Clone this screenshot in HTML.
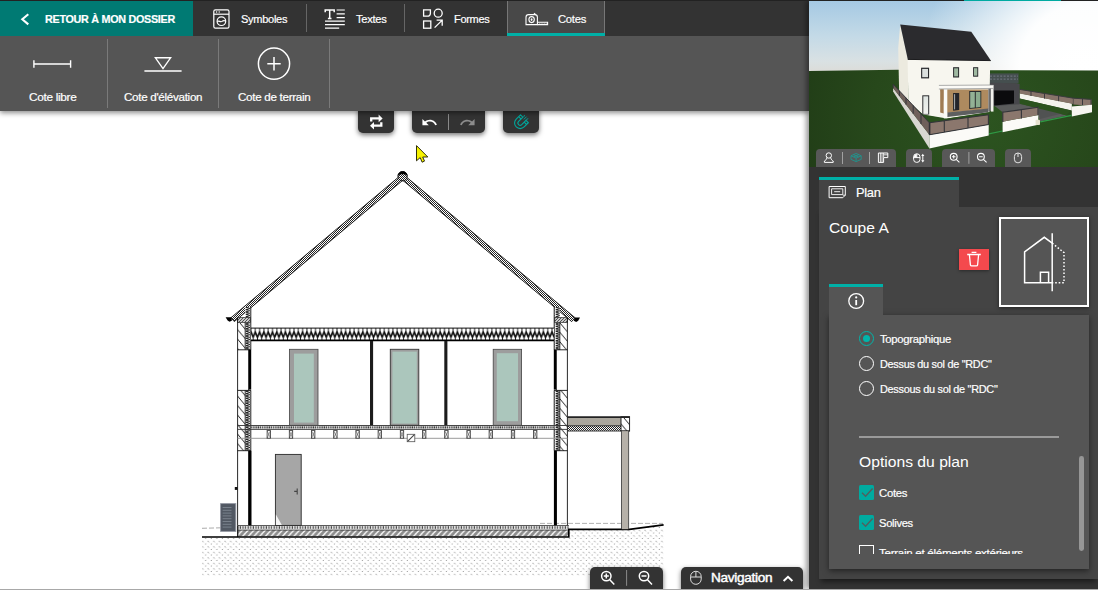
<!DOCTYPE html>
<html lang="fr">
<head>
<meta charset="utf-8">
<title>Coupe A</title>
<style>
html,body{margin:0;padding:0;}
body{width:1098px;height:590px;overflow:hidden;background:#fff;font-family:"Liberation Sans",sans-serif;color:#fff;}
#app{position:relative;width:1098px;height:590px;overflow:hidden;background:#fff;}
.abs{position:absolute;}
.t{position:absolute;white-space:nowrap;line-height:1;color:#fff;}
/* top */
#topline{left:0;top:0;width:1098px;height:1px;background:#222;}
#header{left:0;top:1px;width:809px;height:35px;background:#333;}
#back{left:0;top:1px;width:193px;height:35px;background:#007a73;}
#toolbar{left:0;top:36px;width:809px;height:74.5px;background:#555;box-shadow:0 2px 5px rgba(0,0,0,.45);}
.hdiv{position:absolute;top:4px;width:1px;height:28px;background:#666;}
.tdiv{position:absolute;top:39px;width:1px;height:69px;background:#7a7a7a;}
#tabact{left:507px;top:1px;width:98px;height:35px;background:#484848;border-left:1px solid #777;border-right:1px solid #777;box-sizing:border-box;}
#tabact i{position:absolute;left:-1px;right:-1px;bottom:0;height:3px;background:#00b0a7;}
/* right */
#right{left:809px;top:1px;width:289px;height:588px;background:#333;box-shadow:-3px 0 5px rgba(0,0,0,.4);}
#view3d{left:809px;top:1px;width:289px;height:166px;overflow:hidden;}
#inner{left:819px;top:207px;width:279px;height:372px;background:#444;box-shadow:0 5px 5px -2px rgba(0,0,0,.45);}
#plantab{left:819px;top:177px;width:140px;height:30px;background:#444;border-top:3px solid #00b0a7;box-sizing:border-box;}
#content{left:829px;top:315px;width:260px;height:254px;background:#555;box-shadow:0 2px 6px rgba(0,0,0,.5);}
#infotab{left:829px;top:284px;width:54px;height:31px;background:#555;border-top:3px solid #00b0a7;box-sizing:border-box;}
#bottombar{left:0;top:588.6px;width:1098px;height:1.4px;background:#a8a8a8;}
.vbtn{position:absolute;top:148px;height:18px;background:#585858;border-radius:4px 4px 0 0;}
.cbtn{position:absolute;background:#333;box-shadow:0 2px 5px rgba(0,0,0,.55);}

.lbl{letter-spacing:-0.3px;-webkit-text-stroke:0.2px #fff;position:absolute;white-space:nowrap;line-height:14px;height:14px;color:#fff;transform-origin:0 50%;}
.ic{position:absolute;overflow:visible;}
</style>
</head>
<body>
<div id="app">
  <!-- canvas drawing -->
  <svg id="draw" class="abs" style="left:0;top:110px" width="809" height="480" viewBox="0 110 809 480">
    <defs>
      <pattern id="pChk" width="2" height="2" patternUnits="userSpaceOnUse"><rect width="2" height="2" fill="#fff"/><rect x="0" y="0" width="1" height="1" fill="#222" shape-rendering="crispEdges"/><rect x="1" y="1" width="1" height="1" fill="#222" shape-rendering="crispEdges"/></pattern>
      <pattern id="pDots" width="5.6" height="5.5" patternUnits="userSpaceOnUse"><path d="M0.5 1.8L1.8 3.1M3.3 5.8L4.6 4.5" stroke="#858585" stroke-width="0.9" fill="none"/></pattern>
      <pattern id="pBlkL" width="8" height="9.5" patternUnits="userSpaceOnUse"><rect width="8" height="9.5" fill="#fff"/><path d="M-1 -1.2L9 10.7M-1 -10.7L9 1.2M-1 8.3L9 20.2" stroke="#111" stroke-width="0.9"/></pattern>
      <pattern id="pInsH" width="4.3" height="12.4" patternUnits="userSpaceOnUse" x="251" y="328"><rect width="4.3" height="12.4" fill="#fff"/><path d="M-0.3 3.1L2.15 9.3L4.6 3.1" stroke="#111" stroke-width="1.7" fill="none" stroke-linejoin="round"/><path d="M0 0V3.4M4.3 0V3.4M2.15 9V12.4" stroke="#111" stroke-width="0.9" fill="none"/></pattern>
      <pattern id="pInsV" width="5" height="2.4" patternUnits="userSpaceOnUse"><rect width="5" height="2.4" fill="#fff"/><path d="M0.6 0L4.4 1.2L0.6 2.4" stroke="#111" stroke-width="1" fill="none"/></pattern>
      <pattern id="pSlab" width="5.7" height="6" patternUnits="userSpaceOnUse"><rect width="5.7" height="6" fill="#8d8d8d"/><path d="M-1 6.5L6.7 -1.2M-1 12.2L6.7 4.5M-1 0.8L6.7 -6.9" stroke="#f4f4f4" stroke-width="1.5"/></pattern>
      <pattern id="pScr" width="2.6" height="5" patternUnits="userSpaceOnUse"><rect width="2.6" height="5" fill="#e9e9e9"/><rect x="0.6" y="1.2" width="1.1" height="2.6" fill="#444"/></pattern>
      <pattern id="pRing" width="3" height="3" patternUnits="userSpaceOnUse"><rect width="3" height="3" fill="#c8c8c8"/><path d="M-1 4L4 -1M-1 1L1 -1M2 4L4 2" stroke="#444" stroke-width="0.9"/></pattern>
      <pattern id="pFlr" width="2.2" height="3.8" patternUnits="userSpaceOnUse" y="425.4"><rect width="2.2" height="3.8" fill="#f2f2f2"/><rect x="0.3" y="0.9" width="1.3" height="2.2" fill="#3a3a3a"/></pattern>
    </defs>
    <!-- ground -->
    <path d="M202 537.5H568.9V529.6H629.5L663.6 525.3V575.4H202Z" fill="url(#pDots)"/>
    <path d="M202 528.3L237 527.4" stroke="#a0a0a0" stroke-width="0.9" stroke-dasharray="5 2" fill="none"/>
    <path d="M540 523.4H663" stroke="#a8a8a8" stroke-width="0.9" stroke-dasharray="5 2" fill="none"/>
    <!-- slab -->
    <rect x="237.6" y="525.4" width="331.3" height="4.8" fill="url(#pScr)"/>
    <rect x="237.6" y="530" width="331.3" height="6.6" fill="url(#pSlab)"/>
    <path d="M237.6 525.5H568.9M237.6 530.1H568.9" stroke="#333" stroke-width="0.8" fill="none"/>
    <path d="M237.7 525.4V537" stroke="#111" stroke-width="1.2"/>
    <path d="M202 537H568.8V529.3H629.5L663.6 524.9" stroke="#000" stroke-width="1.7" fill="none" stroke-linejoin="miter"/>
    <!-- carport -->
    <rect x="567.5" y="418" width="54" height="7.8" fill="#aaa69d"/>
    <rect x="567.5" y="425.8" width="54" height="5" fill="url(#pChk)"/>
    <rect x="621" y="416.8" width="8.6" height="14.2" fill="url(#pBlkL)" stroke="#111" stroke-width="0.9"/>
    <path d="M567.5 417.2H629.8" stroke="#222" stroke-width="1.7"/>
    <path d="M567.5 425.8H621M567.5 431H629.6" stroke="#222" stroke-width="0.9"/>
    <rect x="621.6" y="431.2" width="6.9" height="98" fill="#b6b1a9"/>
    <path d="M621.5 431V529M628.6 431V529" stroke="#444" stroke-width="0.9"/>
    <!-- roof -->
    <path d="M402.5 173.8L231 317.7L234.3 321.6L402.5 180.5Z" fill="url(#pChk)" stroke="#111" stroke-width="0.9" stroke-linejoin="miter"/>
    <path d="M402.5 173.8L575 317.7L571.7 321.6L403 180.5Z" fill="url(#pChk)" stroke="#111" stroke-width="0.9" stroke-linejoin="miter"/>
    <circle cx="402.6" cy="176.2" r="4.7" fill="url(#pChk)" stroke="#111" stroke-width="0.9"/>
    <path d="M397.7 176A4.9 4.7 0 0 1 407.5 176C406 173.6 399.2 173.6 397.7 176Z" fill="#000"/>
    <path d="M225.6 317.2H231.2L232 320.6L229.6 321.8L227.6 320.6Z" fill="#000"/>
    <path d="M580 317.4H574.6L573.8 320.8L576.2 322L578.2 320.8Z" fill="#000"/>
    <!-- walls -->
    <g id="wallL">
      <rect x="245.2" y="307" width="5.2" height="43" fill="url(#pInsV)"/>
      <rect x="237.6" y="322.5" width="7.6" height="27.3" fill="url(#pBlkL)"/>
      <rect x="237.6" y="317.4" width="12.6" height="5.2" fill="url(#pRing)" stroke="#333" stroke-width="0.7"/>
      <rect x="245.2" y="390.4" width="5.2" height="60.3" fill="url(#pInsV)"/>
      <rect x="237.6" y="390.4" width="7.6" height="60.3" fill="url(#pBlkL)"/>
      <path d="M237.6 317.4V525.4M245.2 322.6V349.8M245.2 390.4V450.7M250.8 307V350M250.8 390.4V450.7M237.6 349.8H251M237.6 390.4H251M237.6 450.7H251M248.6 350V390M248.6 451V525" stroke="#111" stroke-width="0.9" fill="none"/>
      <path d="M250.1 350V389.6" stroke="#000" stroke-width="2.2"/>
      <path d="M250.1 450.7V525.4" stroke="#000" stroke-width="2.8"/>
    </g>
    <g id="wallR">
      <rect x="554.6" y="307" width="5.2" height="43" fill="url(#pInsV)"/>
      <rect x="559.8" y="322.5" width="7.6" height="27.3" fill="url(#pBlkL)"/>
      <rect x="554.8" y="317.4" width="12.6" height="5.2" fill="url(#pRing)" stroke="#333" stroke-width="0.7"/>
      <rect x="554.6" y="390.4" width="5.2" height="60.3" fill="url(#pInsV)"/>
      <rect x="559.8" y="390.4" width="7.6" height="60.3" fill="url(#pBlkL)"/>
      <path d="M567.4 317.4V525.4M559.8 322.6V349.8M559.8 390.4V450.7M554.2 307V350M554.2 390.4V450.7M554 349.8H567.4M554 390.4H567.4M554 450.7H567.4M556.4 350V390M556.4 451V525" stroke="#111" stroke-width="0.9" fill="none"/>
      <path d="M554.9 350V389.6" stroke="#000" stroke-width="2.2"/>
      <path d="M555.3 450.7V525.4" stroke="#000" stroke-width="2.8"/>
    </g>
    <!-- ceiling insulation -->
    <rect x="251" y="328" width="303" height="12.4" fill="url(#pInsH)"/>
    <path d="M251 328.1H554" stroke="#111" stroke-width="1"/>
    <path d="M251 340.4H554" stroke="#000" stroke-width="1.7"/>
    <!-- partitions -->
    <rect x="370" y="341" width="3.1" height="85" fill="#1c1c1c"/>
    <rect x="444.3" y="341" width="3.1" height="85" fill="#1c1c1c"/>
    <!-- floor -->
    <rect x="251" y="425.4" width="303.4" height="3.8" fill="url(#pFlr)"/>
    <path d="M237.6 425.5H567.4M237.6 429.4H567.4" stroke="#333" stroke-width="0.9"/>
    <path d="M237.6 438.3H567.4" stroke="#9a9a9a" stroke-width="1"/>
    <g id="joists" fill="#fff" stroke="#333" stroke-width="0.8"><rect x="267.1" y="430.6" width="3.4" height="7.6"/><path d="M267.1 430.6L270.5 438.2M270.5 430.6L267.1 438.2" stroke-width="0.5"/><rect x="289.3" y="430.6" width="3.4" height="7.6"/><path d="M289.3 430.6L292.7 438.2M292.7 430.6L289.3 438.2" stroke-width="0.5"/><rect x="311.5" y="430.6" width="3.4" height="7.6"/><path d="M311.5 430.6L314.9 438.2M314.9 430.6L311.5 438.2" stroke-width="0.5"/><rect x="333.7" y="430.6" width="3.4" height="7.6"/><path d="M333.7 430.6L337.1 438.2M337.1 430.6L333.7 438.2" stroke-width="0.5"/><rect x="355.9" y="430.6" width="3.4" height="7.6"/><path d="M355.9 430.6L359.3 438.2M359.3 430.6L355.9 438.2" stroke-width="0.5"/><rect x="378.1" y="430.6" width="3.4" height="7.6"/><path d="M378.1 430.6L381.5 438.2M381.5 430.6L378.1 438.2" stroke-width="0.5"/><rect x="400.3" y="430.6" width="3.4" height="7.6"/><path d="M400.3 430.6L403.7 438.2M403.7 430.6L400.3 438.2" stroke-width="0.5"/><rect x="422.5" y="430.6" width="3.4" height="7.6"/><path d="M422.5 430.6L425.9 438.2M425.9 430.6L422.5 438.2" stroke-width="0.5"/><rect x="444.7" y="430.6" width="3.4" height="7.6"/><path d="M444.7 430.6L448.1 438.2M448.1 430.6L444.7 438.2" stroke-width="0.5"/><rect x="466.9" y="430.6" width="3.4" height="7.6"/><path d="M466.9 430.6L470.3 438.2M470.3 430.6L466.9 438.2" stroke-width="0.5"/><rect x="489.1" y="430.6" width="3.4" height="7.6"/><path d="M489.1 430.6L492.5 438.2M492.5 430.6L489.1 438.2" stroke-width="0.5"/><rect x="511.3" y="430.6" width="3.4" height="7.6"/><path d="M511.3 430.6L514.7 438.2M514.7 430.6L511.3 438.2" stroke-width="0.5"/><rect x="533.5" y="430.6" width="3.4" height="7.6"/><path d="M533.5 430.6L536.9 438.2M536.9 430.6L533.5 438.2" stroke-width="0.5"/></g>
    <rect x="407.2" y="434.3" width="7.6" height="7.4" fill="#fff" stroke="#555" stroke-width="0.8"/><path d="M407.6 441.3L414.4 434.7" stroke="#444" stroke-width="1.1"/>
    <!-- windows -->
    <g>
      <rect x="289.4" y="349.3" width="28.6" height="76" fill="#9d9d9d" stroke="#444" stroke-width="0.8"/><rect x="294" y="353.6" width="19.8" height="69" fill="#abc6bc"/>
      <rect x="390.3" y="349.3" width="28.5" height="76" fill="#9d9d9d" stroke="#333" stroke-width="0.9"/><rect x="392.4" y="351.6" width="24.4" height="72" fill="#abc6bc"/>
      <rect x="493.2" y="349.3" width="28.4" height="76" fill="#9d9d9d" stroke="#444" stroke-width="0.8"/><rect x="496.8" y="353.2" width="21.2" height="68" fill="#abc6bc"/>
    </g>
    <!-- door -->
    <rect x="275.4" y="454.4" width="25.8" height="71" fill="#a6a6a6" stroke="#2a2a2a" stroke-width="0.9"/>
    <path d="M275.9 514.5L281.8 525H275.9Z" fill="#f4f4f4"/>
    <path d="M297.2 488.6V494.6M294.2 491.4H297.2" stroke="#444" stroke-width="1.1" fill="none"/>
    <!-- heat pump -->
    <rect x="220.6" y="503.6" width="15.2" height="27.8" fill="#515863" stroke="#9499a3" stroke-width="0.9"/>
    <path d="M222.6 507.5H231.5M222.6 510.3H231.5M222.6 513.1H231.5M222.6 515.9H231.5M222.6 518.7H231.5M222.6 521.5H231.5M222.6 524.3H231.5M222.6 527.1H231.5" stroke="#7d8490" stroke-width="0.9"/>
    <rect x="234.8" y="487" width="2.8" height="2.9" fill="#111"/>
  </svg>


  <!-- canvas floating buttons -->
  <div class="cbtn" style="left:358px;top:108px;width:36px;height:24.6px;border-radius:0 0 5px 5px;">
    <svg class="ic" style="left:0;top:0" width="36" height="25" viewBox="358 108 36 25" fill="none" stroke="#fff" stroke-width="2.3" stroke-linejoin="miter">
      <path d="M371.2 121.6V118.4H379.2"/><path d="M378.6 114.6L382.6 118.4L378.6 122.2Z" fill="#fff" stroke="none"/>
      <path d="M381.3 122.2V125.7H373.4"/><path d="M374 121.9L370 125.7L374 129.5Z" fill="#fff" stroke="none"/>
    </svg>
  </div>
  <div class="cbtn" style="left:412px;top:108px;width:73px;height:24.6px;border-radius:0 0 5px 5px;">
    <svg class="ic" style="left:8.8px;top:5.6px" width="17" height="17" viewBox="0 0 24 24"><path fill="#fff" d="M12.5 8c-2.65 0-5.05.99-6.9 2.6L2 7v9h9l-3.62-3.62c1.39-1.16 3.16-1.88 5.12-1.88 3.54 0 6.55 2.31 7.6 5.5l2.37-.78C21.08 11.03 17.15 8 12.5 8z"/></svg>
    <i class="abs" style="left:36px;top:6px;width:1px;height:16px;background:#8a8a8a"></i>
    <svg class="ic" style="left:46.8px;top:5.8px" width="17" height="17" viewBox="0 0 24 24"><path fill="#8c8c8c" d="M18.4 10.6C16.55 8.99 14.15 8 11.5 8c-4.65 0-8.58 3.03-9.96 7.22L3.9 16c1.05-3.19 4.05-5.5 7.6-5.5 1.95 0 3.73.72 5.12 1.88L13 16h9V7l-3.6 3.6z"/></svg>
  </div>
  <div class="cbtn" style="left:503px;top:108px;width:36px;height:24.6px;border-radius:0 0 5px 5px;">
    <svg class="ic" style="left:0;top:0" width="36" height="25" viewBox="503 108 36 25" fill="none" stroke="#00a79d" stroke-width="1.1">
      <g transform="translate(520.6 122.6) rotate(45)">
        <path d="M-5.6 -5.4V0.6A5.6 5.6 0 0 0 5.6 0.6V-5.4H2.2V0.6A2.2 2.2 0 0 1 -2.2 0.6V-5.4Z"/><path d="M-5.6 -2.9H-2.2M2.2 -2.9H5.6"/>
        <path d="M0 -4.6V-8.4M-1.8 -6.2L-2.6 -8.2M1.8 -6.2L2.6 -8.2" stroke-width="0.9"/>
      </g>
    </svg>
  </div>

  <div class="cbtn" style="left:590px;top:567px;width:73px;height:23px;border-radius:5px 5px 0 0;">
    <svg class="ic" style="left:0;top:0" width="73" height="23" viewBox="590 567 73 23" fill="none" stroke="#fff" stroke-width="1.5">
      <circle cx="606.3" cy="576.1" r="4.7"/><path d="M609.8 579.8L614.3 584.4M603.8 576.1H608.8M606.3 573.6V578.6"/>
      <circle cx="644" cy="576.1" r="4.7"/><path d="M647.5 579.8L652 584.4M641.5 576.1H646.5"/>
      <path d="M626.6 570V585.8" stroke="#8a8a8a" stroke-width="1"/>
    </svg>
  </div>
  <div class="cbtn" style="left:681px;top:567px;width:122px;height:23px;border-radius:5px 5px 0 0;">
    <svg class="ic" style="left:0;top:0" width="122" height="23" viewBox="681 567 122 23" fill="none" stroke="#ddd" stroke-width="1">
      <rect x="690.6" y="571.3" width="10.6" height="13" rx="5.2"/><path d="M690.6 577H701.2M695.9 571.3V577"/>
      <path d="M783.6 581L788 576.8L792.4 581" stroke="#fff" stroke-width="2"/>
    </svg>
    <div id="l_nav" class="lbl" style="left:30.4px;top:3.00px;font-size:13px;line-height:15px;height:15px;-webkit-text-stroke:0.45px #fff;transform:scaleX(1.047);">Navigation</div>
  </div>
  <!-- cursor -->
  <svg class="ic" style="left:414px;top:142px" width="18" height="24" viewBox="414 142 18 24"><path d="M416.5 145.6V160.8L420.2 157.6L422.1 162.2L424.5 161.1L422.7 157H427.8Z" fill="#f6f200" stroke="#1a1a00" stroke-width="0.9" stroke-linejoin="miter"/></svg>

  <div id="toolbar" class="abs"></div>
  <div id="header" class="abs"></div>
  <div id="back" class="abs"></div>
  <div id="tabact" class="abs"><i></i></div>
  <div class="hdiv" style="left:306px"></div>
  <div class="hdiv" style="left:404px"></div>
  <div class="tdiv" style="left:107px"></div>
  <div class="tdiv" style="left:218px"></div>
  <div class="tdiv" style="left:329px"></div>


  <!-- header content -->
  <svg class="ic" style="left:19px;top:11px" width="14" height="16" viewBox="0 0 14 16"><path d="M9.3 3.2 L3.3 8.3 L9.3 13.4" fill="none" stroke="#fff" stroke-width="2.1"/></svg>
  <div id="l_back" class="lbl" style="left:45px;top:12.00px;font-size:11.5px;font-weight:bold;transform:scaleX(0.936);">RETOUR À MON DOSSIER</div>

  <svg class="ic" style="left:213px;top:9px" width="17" height="20" viewBox="0 0 17 20" fill="none" stroke="#fff" stroke-width="1.2">
    <rect x="0.8" y="0.8" width="15.2" height="18.4" rx="1.6"/><path d="M0.8 5.2H16"/><circle cx="3.6" cy="3" r="0.7" fill="#fff" stroke="none"/><circle cx="6.2" cy="3" r="0.7" fill="#fff" stroke="none"/>
    <circle cx="8.4" cy="12.2" r="4.3"/><path d="M4.3 12.6 C5.8 10.8 7.4 13.8 9 12.4 S11.4 11.4 12.6 12"/>
  </svg>
  <div id="l_sym" class="lbl" style="left:241px;top:12.00px;font-size:11.7px;transform:scaleX(0.944);">Symboles</div>

  <svg class="ic" style="left:324px;top:9px" width="22" height="20" viewBox="0 0 22 20" fill="none" stroke="#fff" stroke-width="1.2">
    <path d="M1.2 3.2V1H10.2V3.2M5.7 1V9.6M3.9 9.6H7.5" stroke-width="1.5"/>
    <path d="M12.6 1H20.8M12.6 4.8H20.8M12.6 8.6H20.8M1 12.2H20.8M1 15.7H20.8M1 19.2H15.2"/>
  </svg>
  <div id="l_txt" class="lbl" style="left:355.5px;top:12.00px;font-size:11.7px;transform:scaleX(0.954);">Textes</div>

  <svg class="ic" style="left:422px;top:8px" width="22" height="22" viewBox="0 0 22 22" fill="none" stroke="#fff" stroke-width="1.3">
    <path d="M1.6 8.2V1.8H8.4V5.2C8.4 7 7 8.2 5.2 8.2Z"/><circle cx="16.2" cy="5.2" r="4"/>
    <rect x="1.6" y="13" width="7.2" height="7.2"/><path d="M12.6 19.6L20 12.4M14.6 12.2H20.2V17.8"/>
  </svg>
  <div id="l_for" class="lbl" style="left:453.5px;top:12.00px;font-size:11.7px;transform:scaleX(0.939);">Formes</div>

  <svg class="ic" style="left:525px;top:13px" width="24" height="13" viewBox="0 0 24 13" fill="none" stroke="#fff" stroke-width="1.1">
    <path d="M1 11.6V4.2C1 2.6 2.2 1.6 3.6 1.6H9.8C11.4 1.6 12.4 2.8 12.4 4.2V11.6Z"/><path d="M8.6 1.6L9.6 0.6L10.8 1.8"/>
    <ellipse cx="6.6" cy="6.6" rx="2.7" ry="3"/><ellipse cx="6.6" cy="6.6" rx="0.9" ry="1.3" fill="#fff" stroke="none"/>
    <path d="M12.4 9.2H22.6V11.6H12.4" /><path d="M14.8 11.4V10.4M17 11.4V10.4M19.2 11.4V10.4M21.2 11.4V10.4" stroke-width="0.8"/>
  </svg>
  <div id="l_cot" class="lbl" style="left:557.5px;top:12.00px;font-size:11.7px;transform:scaleX(0.964);">Cotes</div>

  <!-- toolbar tools -->
  <svg class="ic" style="left:30px;top:56px" width="44" height="16" viewBox="0 0 44 16" fill="none" stroke="#fff" stroke-width="1.4"><path d="M3.9 8H40.6M3.9 4.2V11.8M40.6 4.2V11.8"/></svg>
  <div id="l_t1" class="lbl" style="left:28.5px;top:90.00px;font-size:11.6px;transform:scaleX(1.019);">Cote libre</div>
  <svg class="ic" style="left:142px;top:54px" width="42" height="20" viewBox="0 0 42 20" fill="none" stroke="#fff" stroke-width="1.4"><path d="M2.4 17H39.6M13.4 3.8H28.6L21 14.6Z"/></svg>
  <div id="l_t2" class="lbl" style="left:123.5px;top:90.00px;font-size:11.6px;transform:scaleX(1.003);">Cote d'élévation</div>
  <svg class="ic" style="left:256px;top:46px" width="36" height="36" viewBox="0 0 36 36" fill="none" stroke="#fff" stroke-width="1.5"><circle cx="18" cy="17.7" r="15.6"/><path d="M11.3 17.7H24.7M18 11V24.4"/></svg>
  <div id="l_t3" class="lbl" style="left:237.5px;top:90.00px;font-size:11.6px;transform:scaleX(1.003);">Cote de terrain</div>

  <div id="right" class="abs"></div>
  <div id="view3d" class="abs">
  <svg class="abs" style="left:0;top:0" width="289" height="166" viewBox="809 1 289 166">
    <defs>
      <linearGradient id="gSky" x1="0" y1="0" x2="0" y2="1"><stop offset="0" stop-color="#a5c9e3"/><stop offset="0.5" stop-color="#c4dae7"/><stop offset="0.85" stop-color="#d9e1e3"/><stop offset="1" stop-color="#dcdcd8"/></linearGradient>
      <radialGradient id="gSun" cx="1085" cy="70" r="165" gradientUnits="userSpaceOnUse"><stop offset="0" stop-color="#fff" stop-opacity="1"/><stop offset="0.4" stop-color="#fff" stop-opacity="0.97"/><stop offset="0.6" stop-color="#fff" stop-opacity="0.62"/><stop offset="0.8" stop-color="#fff" stop-opacity="0.28"/><stop offset="1" stop-color="#fff" stop-opacity="0"/></radialGradient>
      <radialGradient id="gGrass" cx="985" cy="120" r="190" gradientUnits="userSpaceOnUse"><stop offset="0" stop-color="#2c5420"/><stop offset="0.6" stop-color="#27481b"/><stop offset="1" stop-color="#213d17"/></radialGradient>
      <linearGradient id="gGlass" x1="0" y1="0" x2="0" y2="1"><stop offset="0" stop-color="#dfe5e2"/><stop offset="1" stop-color="#f1f2ee"/></linearGradient>
    </defs>
    <rect x="809" y="1" width="289" height="71" fill="url(#gSky)"/>
    <rect x="809" y="1" width="289" height="71" fill="url(#gSun)"/>
    <path d="M809 70.9L898 69.8L990 70.2L1098 70.4V167H809Z" fill="url(#gGrass)"/>
    <!-- back right fence + wall -->
    <path d="M1019.6 93.2L1071.8 103.4V110.4L1019.6 98.4Z" fill="#f4f3ee"/>
    <path d="M1019.6 89.4L1073.5 98.2V104L1019.6 93.6Z" fill="#87736a"/>
    <path d="M1019.6 89.4L1073.5 98.2M1031 91V96M1044.5 93.2V98.6M1058.6 95.6V101.2M1073.4 97.6V104.6" stroke="#3a3a3e" stroke-width="1" fill="none"/>
    <path d="M1073.5 98.2L1091.4 99.4V105.8L1073.5 104.6Z" fill="#8a766c"/>
    <path d="M1073.5 98.2L1091.4 99.4M1082.5 98.8V105.4M1091 99.4V106" stroke="#3a3a3e" stroke-width="1" fill="none"/>
    <path d="M1071.8 106.4L1092 104.8V112.2L1071.8 116.4Z" fill="#f7f6f1"/>
    <!-- driveway -->
    <path d="M994 105.6L1019.6 103.6L1067 115.6L1040 121.6L1036 108.2L1003 112.6Z" fill="#5b5c5c"/>
    <path d="M1038.4 107.4L1019.8 104L1019.8 99L1066 112.6L1040 119Z" fill="#505252"/>
    <path d="M1019.6 98.6L1071 110.6L1066 115.2L1019.6 103.8Z" fill="#2b521e"/>
    <path d="M1040.4 121.8L1071.6 115.4" stroke="#2f9a45" stroke-width="1.2"/>
    <path d="M988.8 133.8L1002.6 131" stroke="#2f9a45" stroke-width="1.2"/>
    <!-- garage -->
    <path d="M989.6 73.4H1018.6V83.6H989.6Z" fill="#4a4f58" opacity="0.85"/>
    <path d="M990 76.2H1018M990 79.2H1018" stroke="#6b717b" stroke-width="1.2" stroke-dasharray="2 1.4"/>
    <path d="M989.6 82.8L1019.6 83.2V104.2L989.6 106.4Z" fill="#47474b"/>
    <path d="M994.2 90.6L1014 90.4V103.6L994.2 105.6Z" fill="#0b0b0d"/>
    <!-- house gable wall -->
    <path d="M900.2 24.7L908 59.3L908.4 101.6L899.2 95.4L898.2 48Z" fill="#eceadf"/>
    <!-- front wall -->
    <path d="M907.6 58.8L990.2 60.2L989.4 112L947 118.6L923 114.6L908.4 101.8Z" fill="#f7f6ef"/>
    <!-- roof -->
    <path d="M900.2 24.6L971.3 31.8L990.8 60.6L907.8 59.4Z" fill="#2b2b2e"/>
    <path d="M907.8 59.4L990.8 60.6" stroke="#1c1c1e" stroke-width="1"/>
    <!-- upper windows -->
    <rect x="921.1" y="67.7" width="8" height="10.7" fill="#26272b"/><rect x="922.2" y="68.9" width="5.8" height="8.3" fill="#dadfdd"/>
    <rect x="953.1" y="67.2" width="6" height="10.3" fill="#26272b"/><rect x="954.1" y="68.3" width="4" height="8.1" fill="#9fb9a1"/>
    <rect x="973.1" y="67.2" width="5.1" height="9.5" fill="#26272b"/><rect x="974" y="68.2" width="3.3" height="7.5" fill="#9fb9a1"/>
    <!-- ground window -->
    <rect x="922.3" y="95.3" width="6.9" height="19.2" fill="#2c2d30"/><rect x="923.3" y="96.3" width="4.9" height="17.6" fill="url(#gGlass)"/>
    <!-- porch -->
    <path d="M940.2 89.6H988.4V109L947.2 113Z" fill="#ae8a5f"/>
    <path d="M940.2 89.6H943.8V113.4L940.2 112.4Z" fill="#a07c53"/>
    <path d="M947.2 112.4L988.4 108.4V112.2L947.2 117Z" fill="#5e5f60"/>
    <path d="M953.1 93.1H959.2V110L953.1 110.8Z" fill="#23242a"/><path d="M954.6 94.2V109.4" stroke="#cfd3d6" stroke-width="0.8"/>
    <path d="M969.2 90.9H981.3V107.8L969.2 109Z" fill="#2b2c2f"/><path d="M970.2 91.9H974.8V107.6L970.2 108Z" fill="#93b195"/><path d="M975.8 91.9H980.4V107L975.8 107.4Z" fill="#8aab8d"/>
    <path d="M988.4 88.6H991V110.8L988.4 111.4Z" fill="#6b6c6e"/>
    <path d="M943.8 88.6H947.3V118.6H943.8Z" fill="#fbfbf7"/>
    <path d="M990.9 88H993.5V111.6H990.9Z" fill="#f2f1ec"/>
    <path d="M938.9 85.4L993.6 85V88.4L938.9 89Z" fill="#fbfaf6"/>
    <path d="M938.9 85.4L993.6 85M938.9 89L993.6 88.4" stroke="#77787a" stroke-width="0.6"/>
    <!-- terrace lawn -->
    <path d="M923 114.8L943.8 118.8L947.4 118.6L988.6 112.4V116L929.4 127Z" fill="#2a501d"/>
    <path d="M899.2 95.4L908.4 101.8L923 114.8L929.4 127L929.4 124L893.4 86Z" fill="#284c1c"/>
    <!-- side (left) fence + wall -->
    <path d="M893.1 88L929.4 134.7V148.4L893.1 91.4Z" fill="#d9d8d2"/>
    <path d="M893.1 84.2L929.4 122.8V134.7L893.1 88Z" fill="#6f605a"/>
    <path d="M893.1 84.2L929.4 122.8M893.2 84.2V88.2M899.4 90.8V96M906 97.8V104.6M913.2 105.4V113.8M921 113.8V124" stroke="#34353a" stroke-width="1" fill="none"/>
    <!-- front fence + wall -->
    <path d="M929.4 134.7L988.7 124.5V135.5L929.4 148.4Z" fill="#fbfaf7"/>
    <path d="M929.4 122.8L988.7 114.7V124.5L929.4 134.7Z" fill="#8b776d"/>
    <path d="M929.4 122.8L988.7 114.7M929.4 134.7L988.7 124.5M944.3 120.8V132.2M968 117.6V128.2M988.4 114.7V124.6" stroke="#34353a" stroke-width="1.1" fill="none"/>
    <path d="M929.6 122.4V135" stroke="#303136" stroke-width="1.6"/>
    <!-- front right fence + wall -->
    <path d="M1002.6 121.8L1038.3 115V124.8L1002.6 132.2Z" fill="#fbfaf7"/>
    <path d="M1002.6 112.3L1038.3 107.2V115L1002.6 121.8Z" fill="#8b776d"/>
    <path d="M1002.6 112.3L1038.3 107.2M1002.8 111.6V122M1021.4 109.6V118.4M1038 106.6V115.2" stroke="#34353a" stroke-width="1.1" fill="none"/>
    <rect x="1035.6" y="119.8" width="4.4" height="5.2" rx="0.8" fill="#e6e2cf"/>
  </svg>
  <!-- view toolbar -->
  <div class="vbtn" style="left:7.2px;width:79.7px;"></div>
  <div class="vbtn" style="left:97.1px;width:25.8px;"></div>
  <div class="vbtn" style="left:133.1px;width:52.9px;"></div>
  <div class="vbtn" style="left:195.9px;width:26.2px;"></div>
  <svg class="abs" style="left:0;top:147px" width="289" height="19" viewBox="809 148 289 19" fill="none" stroke="#fff" stroke-width="1">
    <!-- person -->
    <circle cx="828.8" cy="155.5" r="2.7"/><path d="M826.9 157.6C826.6 159.6 825.6 160.4 824.4 161V162.4H833.2V161C832 160.4 831 159.6 830.7 157.6"/>
    <path d="M842.5 152V164M869.5 152V164M968.9 152V163.8" stroke="#a9a9a9" stroke-width="0.9"/>
    <!-- cube -->
    <g stroke="#1b9a93" stroke-width="0.8"><path d="M856.1 153.4L861.2 155.8V159.4L856.1 161.6L851 159.4V155.8Z"/><path d="M851 155.8L856.1 158L861.2 155.8M856.1 158V161.6M853.4 154.6L858.6 157M858.8 154.6L853.6 157"/></g>
    <!-- plan -->
    <path d="M878.4 153H887.8V157.6H883.6V162.4H878.4Z"/><path d="M880.4 153V162.4M882 153V162.4M883.6 154.8H887.8M883.6 153V157.6" stroke-width="0.8"/>
    <!-- mouse + arrows -->
    <rect x="913.6" y="153.8" width="6.4" height="8.6" rx="3.1"/><path d="M913.6 157.6H920M916.8 153.8V157.6"/><path d="M914 157.2V156.4C914 154.8 915.4 154.2 916.6 154.2V157.2Z" fill="#fff" stroke="none"/>
    <path d="M922.8 155.4V160.8"/><path d="M921.2 156L922.8 153.8L924.4 156ZM921.2 160.2L922.8 162.4L924.4 160.2Z" fill="#fff" stroke="none"/>
    <!-- zoom in/out -->
    <circle cx="953.7" cy="156.8" r="3.4" stroke-width="1.1"/><path d="M956.2 159.4L959.4 162.4M951.9 156.8H955.5M953.7 155V158.6" stroke-width="1.1"/>
    <circle cx="980.9" cy="156.8" r="3.4" stroke-width="1.1"/><path d="M983.4 159.4L986.6 162.4M979.1 156.8H982.7" stroke-width="1.1"/>
    <!-- mouse -->
    <rect x="1014.4" y="153" width="7.2" height="9.8" rx="3.5" stroke="#e6e6e6"/><path d="M1018 153V157" stroke="#e6e6e6"/>
  </svg>
  </div>
  <div id="inner" class="abs"></div>
  <div id="plantab" class="abs"></div>
  <div id="content" class="abs"></div>
  <div id="infotab" class="abs"></div>


  <!-- right panel content -->
  <svg class="ic" style="left:828px;top:185px" width="19" height="14" viewBox="828 185 19 14" fill="none" stroke="#fff" stroke-width="1">
    <path d="M829.1 186.5H845.3V195.2L842.8 197.7H829.1Z"/><path d="M831.6 188.8H842.8V194.6H831.6ZM834.2 191.7H840.2M842.8 195.2H845.3" stroke-width="0.9"/>
  </svg>
  <div id="l_plan" class="lbl" style="left:855.8px;top:185.00px;font-size:13.5px;line-height:16px;height:16px;transform:scaleX(0.952);">Plan</div>
  <div id="l_coupe" class="lbl" style="-webkit-text-stroke:0;letter-spacing:0;left:829px;top:219.00px;font-size:15.4px;line-height:18px;height:18px;transform:scaleX(1.013);">Coupe A</div>

  <div class="abs" style="left:959px;top:249px;width:30px;height:21px;background:#f4494d;box-shadow:0 1px 3px rgba(0,0,0,.4);">
    <svg class="ic" style="left:8px;top:2px" width="14" height="17" viewBox="0 0 14 17" fill="none" stroke="#fff" stroke-width="1.3"><path d="M0.2 3.5H13.8M4.6 1.3H9.4M2.4 3.8L3.4 13.8C3.5 14.6 4 14.9 4.8 14.9H9.2C10 14.9 10.5 14.6 10.6 13.8L11.6 3.8"/></svg>
  </div>

  <div class="abs" style="left:999px;top:217px;width:90px;height:90px;box-sizing:border-box;border:2px solid #fff;background:#555;box-shadow:0 1px 4px rgba(0,0,0,.5);">
    <svg class="ic" style="left:-2px;top:-2px" width="90" height="90" viewBox="999 217 90 90" fill="none" stroke="#fff" stroke-width="1.5">
      <path d="M1052.2 282.8H1024.6V251.8L1044.3 237.3L1052.2 243.2"/><path d="M1040.4 282.8V272.2H1048.6V282.8"/>
      <path d="M1052.2 233.2V291.2"/><path d="M1052.2 243.2L1064 252.6V282.8H1052.2" stroke-dasharray="1.6 1.9"/>
    </svg>
  </div>

  <svg class="ic" style="left:847px;top:292px" width="18" height="18" viewBox="0 0 18 18" fill="none" stroke="#fff" stroke-width="1.3"><circle cx="9.2" cy="9" r="7.4"/><path d="M9.2 8V13.2" stroke-width="1.8"/><circle cx="9.2" cy="5.4" r="1.1" fill="#fff" stroke="none"/></svg>

  <!-- radios -->
  <div class="abs" style="left:859px;top:331px;width:15px;height:15px;box-sizing:border-box;border:1.3px solid #00b5ab;border-radius:50%;"><i style="position:absolute;left:2.7px;top:2.7px;width:7px;height:7px;border-radius:50%;background:#00b5ab"></i></div>
  <div class="abs" style="left:859px;top:356px;width:15px;height:15px;box-sizing:border-box;border:1.3px solid #fff;border-radius:50%;"></div>
  <div class="abs" style="left:859px;top:381px;width:15px;height:15px;box-sizing:border-box;border:1.3px solid #fff;border-radius:50%;"></div>
  <div id="l_r1" class="lbl" style="left:879.5px;top:332.00px;font-size:11.6px;transform:scaleX(0.975);">Topographique</div>
  <div id="l_r2" class="lbl" style="left:879.5px;top:357.00px;font-size:11.6px;transform:scaleX(0.938);">Dessus du sol de "RDC"</div>
  <div id="l_r3" class="lbl" style="left:879.5px;top:382.00px;font-size:11.6px;transform:scaleX(0.940);">Dessous du sol de "RDC"</div>

  <div class="abs" style="left:859px;top:435.5px;width:200px;height:2px;background:#9a9a9a;"></div>
  <div id="l_opt" class="lbl" style="-webkit-text-stroke:0;letter-spacing:0;left:859px;top:453.00px;font-size:15.4px;line-height:18px;height:18px;transform:scaleX(1.018);">Options du plan</div>

  <div class="abs" style="left:859px;top:485px;width:15px;height:15px;background:#00aaa0;border-radius:1.5px;"><svg class="ic" style="left:0;top:0" width="15" height="15" viewBox="0 0 15 15" fill="none" stroke="#50605f" stroke-width="1.5"><path d="M3 7.8L6.6 11.2L13.6 3.6"/></svg></div>
  <div class="abs" style="left:859px;top:515px;width:15px;height:15px;background:#00aaa0;border-radius:1.5px;"><svg class="ic" style="left:0;top:0" width="15" height="15" viewBox="0 0 15 15" fill="none" stroke="#50605f" stroke-width="1.5"><path d="M3 7.8L6.6 11.2L13.6 3.6"/></svg></div>
  <div id="l_c1" class="lbl" style="left:879px;top:486.00px;font-size:11.6px;transform:scaleX(0.979);">Cotes</div>
  <div id="l_c2" class="lbl" style="left:879px;top:516.00px;font-size:11.6px;transform:scaleX(0.961);">Solives</div>
  <div class="abs" style="left:829px;top:540px;width:260px;height:14px;overflow:hidden;">
    <div class="abs" style="left:30px;top:5px;width:15px;height:15px;box-sizing:border-box;border:1.3px solid #fff;"></div>
    <div id="l_c3" class="lbl" style="left:50px;top:6.00px;font-size:11.6px;transform:scaleX(1.001);">Terrain et éléments extérieurs</div>
  </div>
  <div class="abs" style="left:1079.3px;top:456px;width:4.8px;height:95px;border-radius:2.4px;background:#969696;"></div>

  <div id="topline" class="abs"></div>
  <div class="abs" style="left:964px;top:0;width:97px;height:1px;background:#00aaa1;"></div>
  <div id="bottombar" class="abs"></div>
</div>
</body>
</html>
